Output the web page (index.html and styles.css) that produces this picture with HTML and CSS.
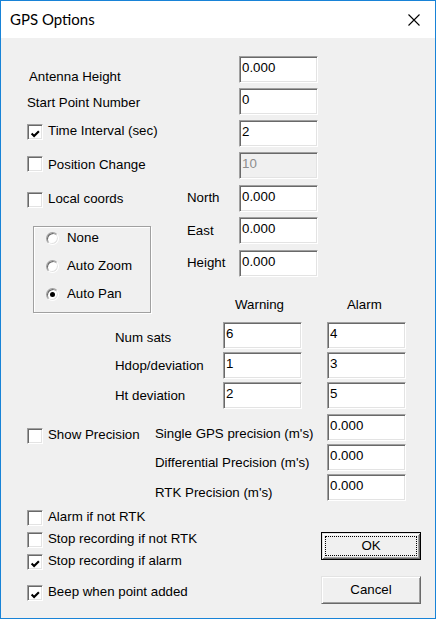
FILE: index.html
```html
<!DOCTYPE html>
<html>
<head>
<meta charset="utf-8">
<title>GPS Options</title>
<link rel="stylesheet" href="styles.css">
</head>
<body>
<div class="window">
  <div class="titlebar">
    <span class="title">GPS Options</span>
    <svg class="close" width="12" height="12" viewBox="0 0 12 12"><path d="M0.5 0.5 L11.5 11.5 M11.5 0.5 L0.5 11.5" stroke="#000" stroke-width="1.1" fill="none"/></svg>
  </div>
  <div class="content">
    <div class="trow h32">
      <div class="lead"><span class="lbl l-ant">Antenna Height</span></div>
      <div class="edit">0.000</div>
    </div>
    <div class="trow h32">
      <div class="lead"><span class="lbl l-start">Start Point Number</span></div>
      <div class="edit">0</div>
    </div>
    <div class="trow h32">
      <div class="lead">
        <label class="chk c-time"><span class="box"><svg class="tick" width="14" height="14" viewBox="0 0 14 14"><path d="M3.6 8.6 L6.1 11.1 L10.9 6.3" stroke="#000" stroke-width="2.1" fill="none"/></svg></span><span class="t">Time Interval (sec)</span></label>
      </div>
      <div class="edit">2</div>
    </div>
    <div class="trow h33">
      <div class="lead">
        <label class="chk c-pos"><span class="box"></span><span class="t">Position Change</span></label>
      </div>
      <div class="edit dis">10</div>
    </div>
    <div class="trow h32">
      <div class="lead">
        <label class="chk c-local"><span class="box"></span><span class="t">Local coords</span></label>
        <span class="lbl l-north">North</span>
      </div>
      <div class="edit">0.000</div>
    </div>

    <div class="mid">
      <div class="group">
        <div class="rrow"><span class="rad"></span><span class="t">None</span></div>
        <div class="rrow"><span class="rad"></span><span class="t">Auto Zoom</span></div>
        <div class="rrow"><span class="rad on"></span><span class="t">Auto Pan</span></div>
      </div>
      <div class="midr">
        <div class="mrow r-east"><span class="mlbl">East</span><div class="edit">0.000</div></div>
        <div class="mrow r-height"><span class="mlbl">Height</span><div class="edit">0.000</div></div>
        <div class="hdr"><span class="hw">Warning</span><span class="ha">Alarm</span></div>
      </div>
    </div>

    <div class="s3">
      <div class="grow"><span class="glbl m8">Num sats</span><div class="edit">6</div><div class="edit e2">4</div></div>
      <div class="grow"><span class="glbl m6">Hdop/deviation</span><div class="edit">1</div><div class="edit e2">3</div></div>
      <div class="grow"><span class="glbl m6">Ht deviation</span><div class="edit">2</div><div class="edit e2">5</div></div>
    </div>

    <div class="s4">
      <div class="prow">
        <div class="pfirst"><label class="chk c-show"><span class="box"></span><span class="t">Show Precision</span></label></div>
        <span class="plbl m12">Single GPS precision (m's)</span>
        <div class="edit">0.000</div>
      </div>
      <div class="prow">
        <div class="pfirst"></div>
        <span class="plbl m11">Differential Precision (m's)</span>
        <div class="edit">0.000</div>
      </div>
      <div class="prow">
        <div class="pfirst"></div>
        <span class="plbl m11">RTK Precision (m's)</span>
        <div class="edit">0.000</div>
      </div>
    </div>

    <div class="bottom">
      <div class="checks">
        <label class="chk bc"><span class="box"></span><span class="t">Alarm if not RTK</span></label>
        <label class="chk bc"><span class="box"></span><span class="t">Stop recording if not RTK</span></label>
        <label class="chk bc"><span class="box"><svg class="tick" width="14" height="14" viewBox="0 0 14 14"><path d="M3.6 8.6 L6.1 11.1 L10.9 6.3" stroke="#000" stroke-width="2.1" fill="none"/></svg></span><span class="t">Stop recording if alarm</span></label>
        <label class="chk bc beep"><span class="box"><svg class="tick" width="14" height="14" viewBox="0 0 14 14"><path d="M3.6 8.6 L6.1 11.1 L10.9 6.3" stroke="#000" stroke-width="2.1" fill="none"/></svg></span><span class="t">Beep when point added</span></label>
      </div>
      <div class="btns">
        <div class="btn default">OK</div>
        <div class="btn cancel">Cancel</div>
      </div>
    </div>
  </div>
</div>
</body>
</html>
```
FILE: styles.css
```css
html, body {
  margin: 0;
  padding: 0;
  background: #f0f0f0;
}

.window {
  width: 436px;
  height: 619px;
  box-sizing: border-box;
  border: 1px solid #1883d7;
  background: #f0f0f0;
  display: flex;
  flex-direction: column;
  font-family: "Liberation Sans", Arial, sans-serif;
  font-size: 13.3px;
  line-height: 15px;
  color: #000;
  overflow: hidden;
}

.titlebar {
  height: 37px;
  flex: none;
  background: #fff;
  display: flex;
  align-items: center;
  justify-content: space-between;
  padding: 0 15px 0 9px;
}

.title {
  font-family: Lato, "Open Sans", sans-serif;
  font-size: 15px;
  line-height: 37px;
  color: #000;
}

.close {
  display: block;
}

.content {
  padding-top: 18px;
}

.lbl, .t, .mlbl, .glbl, .plbl, .hw, .ha {
  white-space: nowrap;
}

/* top rows */
.trow {
  display: flex;
}
.h32 { height: 32px; }
.h33 { height: 33px; }

.lead {
  width: 238px;
  display: flex;
  align-items: flex-start;
}

.l-ant { margin: 13px 0 0 28px; }
.l-start { margin: 7px 0 0 26px; }
.l-north { width: 52px; margin-top: 5px; }

/* edit boxes */
.edit {
  width: 79px;
  height: 27px;
  box-sizing: border-box;
  flex: none;
  border: 1px solid;
  border-color: #a0a0a0 #ffffff #ffffff #a0a0a0;
  box-shadow: inset 1px 1px #696969, inset -1px -1px #e3e3e3;
  background: #fff;
  padding: 3px 0 0 2px;
  white-space: nowrap;
}
.edit.dis {
  background: #f0f0f0;
  color: #8d8d8d;
}

/* checkboxes */
.chk {
  display: flex;
  align-items: flex-start;
}
.box {
  width: 16px;
  height: 16px;
  box-sizing: border-box;
  flex: none;
  border: 1px solid;
  border-color: #a0a0a0 #ffffff #ffffff #a0a0a0;
  box-shadow: inset 1px 1px #696969, inset -1px -1px #e3e3e3;
  background: #fff;
}
.tick {
  display: block;
}
.chk .t {
  margin: -1px 0 0 5px;
}

.c-time { margin: 4px 0 0 26px; }
.c-pos { margin: 4px 0 0 26px; }
.c-pos .t { margin-top: 1px; }
.c-local { margin: 7px 0 0 26px; flex: 1; }

/* middle section */
.mid {
  display: flex;
  height: 97px;
}
.group {
  margin: 9px 0 0 32px;
  width: 118px;
  height: 87px;
  box-sizing: border-box;
  border: 1px solid #a0a0a0;
  box-shadow: inset 1px 1px #fff, 1px 1px #fff;
  padding-top: 5px;
}
.rrow {
  display: flex;
  align-items: flex-start;
  height: 28px;
}
.rad {
  width: 13px;
  height: 13px;
  box-sizing: border-box;
  flex: none;
  margin-left: 12px;
  border-radius: 50%;
  border: 1px solid;
  border-color: #a0a0a0 #ffffff #ffffff #a0a0a0;
  box-shadow: inset 1px 1px #696969, inset -1px -1px #e3e3e3;
  background: #fff;
  display: flex;
  align-items: center;
  justify-content: center;
}
.rad.on::after {
  content: "";
  width: 5px;
  height: 5px;
  border-radius: 50%;
  background: #000;
}
.rrow .t {
  margin: -2px 0 0 8px;
}

.midr {
  margin-left: 36px;
  display: flex;
  flex-direction: column;
}
.mrow {
  display: flex;
  align-items: center;
}
.r-east { height: 33px; align-items: flex-start; }
.r-east .mlbl { margin-top: 6px; }
.r-height { height: 27px; align-items: flex-start; }
.r-height .mlbl { margin-top: 5px; }
.mlbl {
  width: 52px;
}
.hdr {
  display: flex;
  margin-top: 20px;
}
.hw {
  margin-left: 48px;
  width: 112px;
}

/* warning / alarm grid */
.s3 {
  padding-top: 8px;
}
.grow {
  display: flex;
  align-items: flex-start;
  height: 30px;
}
.glbl {
  width: 108px;
  margin-left: 114px;
}
.m8 { margin-top: 8px; }
.m6 { margin-top: 6px; }
.e2 { margin-left: 25px; }

/* precision section */
.s4 {
  margin-top: 2px;
}
.prow {
  display: flex;
  align-items: flex-start;
  height: 30px;
}
.pfirst {
  width: 154px;
  flex: none;
}
.c-show { margin: 14px 0 0 26px; }
.plbl {
  width: 172px;
  flex: none;
}
.m12 { margin-top: 12px; }
.m11 { margin-top: 11px; }

/* bottom */
.bottom {
  display: flex;
}
.checks {
  margin-left: 26px;
  width: 294px;
  padding-top: 6px;
  display: flex;
  flex-direction: column;
}
.bc {
  margin-bottom: 6px;
}
.bc.beep {
  margin-top: 9px;
}
.btns {
  padding-top: 28px;
  display: flex;
  flex-direction: column;
}
.btn {
  width: 100px;
  height: 28px;
  box-sizing: border-box;
  background: #f0f0f0;
  border: 1px solid;
  border-color: #e3e3e3 #696969 #696969 #e3e3e3;
  box-shadow: inset 1px 1px #fff, inset -1px -1px #a0a0a0;
  display: flex;
  align-items: center;
  justify-content: center;
  padding-bottom: 2px;
}
.btn.default {
  border: 1px solid #000;
  box-shadow: inset 1px 1px #e3e3e3, inset -1px -1px #696969, inset 2px 2px #fff, inset -2px -2px #a0a0a0;
  outline: 1px dotted #000;
  outline-offset: -5px;
}
.btn.cancel {
  margin-top: 16px;
}
```
